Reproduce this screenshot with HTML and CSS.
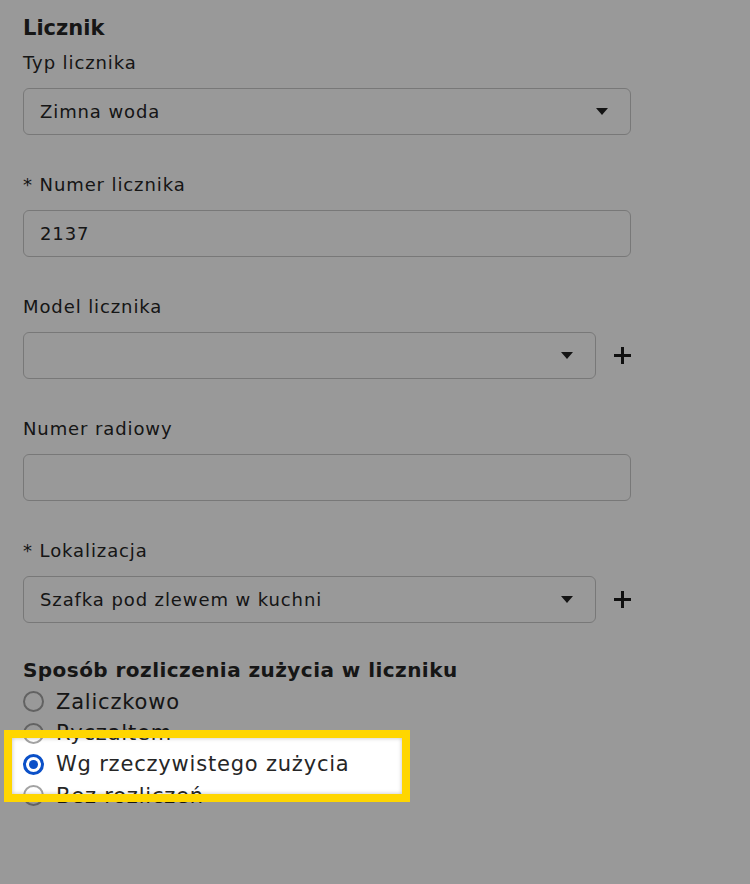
FILE: index.html
```html
<!DOCTYPE html>
<html lang="pl">
<head>
<meta charset="utf-8">
<title>Licznik</title>
<link rel="stylesheet" href="styles.css">
</head>
<body>
<div class="page">
  <h2 class="title">Licznik</h2>

  <div class="fields">
    <div class="field">
      <label class="label">Typ licznika</label>
      <div class="row">
        <div class="control select">
          <span class="value">Zimna woda</span>
          <span class="caret"></span>
        </div>
      </div>
    </div>

    <div class="field">
      <label class="label">* Numer licznika</label>
      <div class="row">
        <div class="control"><span class="value">2137</span></div>
      </div>
    </div>

    <div class="field">
      <label class="label">Model licznika</label>
      <div class="row">
        <div class="control select short">
          <span class="value"></span>
          <span class="caret"></span>
        </div>
        <span class="plus"></span>
      </div>
    </div>

    <div class="field">
      <label class="label">Numer radiowy</label>
      <div class="row">
        <div class="control"><span class="value"></span></div>
      </div>
    </div>

    <div class="field">
      <label class="label">* Lokalizacja</label>
      <div class="row">
        <div class="control select short">
          <span class="value">Szafka pod zlewem w kuchni</span>
          <span class="caret"></span>
        </div>
        <span class="plus"></span>
      </div>
    </div>
  </div>

  <h3 class="section">Sposób rozliczenia zużycia w liczniku</h3>
  <div class="radios">
    <div class="radio"><span class="dot"></span><span>Zaliczkowo</span></div>
    <div class="radio"><span class="dot"></span><span>Ryczałtem</span></div>
    <div class="radio"><span class="dot checked"></span><span>Wg rzeczywistego zużycia</span></div>
    <div class="radio"><span class="dot"></span><span>Bez rozliczeń</span></div>
  </div>

  <div class="spotlight"></div>
</div>
</body>
</html>
```

FILE: styles.css
```css
* { box-sizing: border-box; }
html, body { margin: 0; padding: 0; }
body {
  background: #ffffff;
  font-family: "DejaVu Sans", "Open Sans", sans-serif;
  color: #262626;
  overflow: hidden;
}
.page {
  position: relative;
  width: 750px;
  height: 884px;
  padding: 13px 0 0 23px;
}
.title {
  margin: 0 0 8px;
  font-size: 21px;
  line-height: 30px;
  font-weight: 700;
}
.fields {
  display: flex;
  flex-direction: column;
  gap: 38px;
}
.label {
  display: block;
  font-size: 18px;
  letter-spacing: 0.9px;
  line-height: 24px;
  margin-bottom: 13px;
}
.row {
  display: flex;
  align-items: center;
  gap: 18px;
}
.control {
  width: 608px;
  height: 47px;
  border: 1px solid #c9c9c9;
  border-radius: 6px;
  background: #fff;
  display: flex;
  align-items: center;
  padding: 0 22px 0 16px;
  font-size: 18px;
  letter-spacing: 0.9px;
}
.control.short { width: 573px; }
.value { flex: 1; }
.caret {
  width: 0;
  height: 0;
  border-left: 6px solid transparent;
  border-right: 6px solid transparent;
  border-top: 7px solid #222;
}
.plus {
  position: relative;
  width: 17px;
  height: 17px;
}
.plus::before, .plus::after {
  content: "";
  position: absolute;
  background: #1c1c1c;
}
.plus::before { left: 0; top: 7px; width: 17px; height: 3px; }
.plus::after { left: 7px; top: 0; width: 3px; height: 17px; }
.section {
  margin: 33px 0 0;
  font-size: 20px;
  letter-spacing: 0.45px;
  line-height: 29px;
  font-weight: 700;
}
.radios {
  display: flex;
  flex-direction: column;
  margin-top: 1px;
}
.radio {
  display: flex;
  align-items: center;
  gap: 12px;
  height: 31.4px;
  font-size: 21px;
  letter-spacing: 0.8px;
}
.dot {
  width: 21px;
  height: 21px;
  border-radius: 50%;
  border: 2.5px solid #a3a3a3;
  background: #fff;
  flex: none;
  position: relative;
}
.dot.checked {
  border: 3px solid #0b50c8;
}
.dot.checked::after {
  content: "";
  position: absolute;
  left: 50%;
  top: 50%;
  width: 9px;
  height: 9px;
  margin: -4.5px 0 0 -4.5px;
  border-radius: 50%;
  background: #0b50c8;
}
.spotlight {
  position: absolute;
  left: 4px;
  top: 730px;
  width: 406px;
  height: 72px;
  border: 8px solid #ffd600;
  box-shadow: 0 0 0 3000px rgba(0, 0, 0, 0.4), inset 0 0 4px rgba(0, 0, 0, 0.25);
  pointer-events: none;
}
```
